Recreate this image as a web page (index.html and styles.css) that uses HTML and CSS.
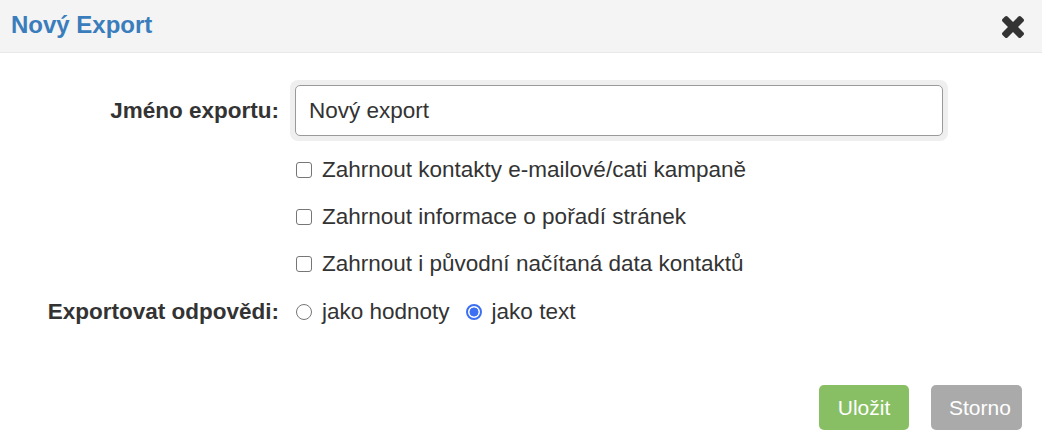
FILE: index.html
```html
<!DOCTYPE html>
<html lang="cs">
<head>
<meta charset="utf-8">
<title>Nový Export</title>
<link rel="stylesheet" href="styles.css">
</head>
<body>
<div class="dialog">
  <div class="dialog-header">
    <h1 class="dialog-title">Nový Export</h1>
    <button class="close-btn" type="button" aria-label="Zavřít">
      <svg viewBox="302 366 1188 1188" width="22" height="22" aria-hidden="true"><path fill="#333" d="M1490 1322q0 40-28 68l-136 136q-28 28-68 28t-68-28l-294-294-294 294q-28 28-68 28t-68-28l-136-136q-28-28-28-68t28-68l294-294-294-294q-28-28-28-68t28-68l136-136q28-28 68-28t68 28l294 294 294-294q28-28 68-28t68 28l136 136q28 28 28 68t-28 68l-294 294 294 294q28 28 28 68z"/></svg>
    </button>
  </div>
  <form class="dialog-body">
    <div class="form-row row-name">
      <label class="form-label" for="name">Jméno exportu:</label>
      <div class="input-wrap"><input id="name" class="text-input" type="text" value="Nový export"></div>
    </div>
    <div class="form-row row-check">
      <span></span>
      <label class="check"><input type="checkbox" class="box cb"><span>Zahrnout kontakty e-mailové/cati kampaně</span></label>
    </div>
    <div class="form-row row-check">
      <span></span>
      <label class="check"><input type="checkbox" class="box cb"><span>Zahrnout informace o pořadí stránek</span></label>
    </div>
    <div class="form-row row-check">
      <span></span>
      <label class="check"><input type="checkbox" class="box cb"><span>Zahrnout i původní načítaná data kontaktů</span></label>
    </div>
    <div class="form-row row-check">
      <span class="form-label">Exportovat odpovědi:</span>
      <div class="radios">
        <label class="check"><input type="radio" name="ans" class="box rb"><span>jako hodnoty</span></label>
        <label class="check"><input type="radio" name="ans" class="box rb" checked><span>jako text</span></label>
      </div>
    </div>
  </form>
  <div class="dialog-footer">
    <button class="btn btn-save" type="button">Uložit</button>
    <button class="btn btn-cancel" type="button">Storno</button>
  </div>
</div>
</body>
</html>
```
FILE: styles.css
```css
html, body {
  margin: 0;
  padding: 0;
  background: #fff;
}
body {
  font-family: "Liberation Sans", Arial, sans-serif;
  color: #333;
  width: 1042px;
  height: 441px;
  overflow: hidden;
}
.dialog {
  display: flex;
  flex-direction: column;
  height: 441px;
}
.dialog-header {
  background: #f4f4f4;
  border-bottom: 1px solid #e8e8e8;
  display: flex;
  align-items: center;
  justify-content: space-between;
  padding: 0 18px 0 11px;
  box-sizing: border-box;
  height: 53px;
}
.dialog-title {
  margin: 0;
  font-size: 24px;
  font-weight: bold;
  color: #3a7dbc;
  line-height: 1;
  padding-bottom: 2px;
}
.close-btn {
  border: 0;
  background: none;
  padding: 0;
  width: 22px;
  height: 22px;
  display: flex;
  margin-top: 1px;
}
.dialog-body {
  margin: 0;
  padding-top: 27px;
  display: flex;
  flex-direction: column;
}
.form-row {
  display: grid;
  grid-template-columns: 279px 648px;
  column-gap: 16px;
  align-items: center;
  font-size: 22.5px;
}
.form-label {
  font-weight: bold;
  text-align: right;
  color: #333;
}
.row-name {
  height: 61px;
  margin-bottom: 5px;
}
.input-wrap {
  border-radius: 8px;
  background: #efefef;
  padding: 5px;
  margin-left: -5px;
  width: 648px;
}
.text-input {
  display: block;
  box-sizing: border-box;
  width: 648px;
  height: 51px;
  border: 1px solid #9a9a9a;
  border-radius: 5px;
  padding: 0 13px;
  font-family: "Liberation Sans", Arial, sans-serif;
  font-size: 22.5px;
  color: #333;
  background: #fff;
  outline: none;
}
.row-check {
  height: 47px;
}
.row-check:last-child {
  height: 49px;
}
.check {
  display: inline-flex;
  align-items: center;
  color: #333;
}
.box {
  appearance: none;
  -webkit-appearance: none;
  box-sizing: border-box;
  background: #fff;
  flex: none;
  margin: 0;
}
.cb {
  width: 16px;
  height: 16px;
  border: 1.5px solid #767676;
  border-radius: 3px;
  margin: 1px 10px 0 1px;
}
.rb {
  width: 16px;
  height: 16px;
  border: 1.5px solid #767676;
  border-radius: 50%;
  margin: 1px 10px 0 1px;
}
.rb:checked {
  border: 2px solid #3c6ff2;
  background: radial-gradient(circle, #3c6ff2 0 4.2px, #fff 4.8px);
}
.radios {
  display: flex;
  gap: 15px;
}
.dialog-footer {
  margin-top: auto;
  display: flex;
  justify-content: flex-end;
  gap: 22px;
  padding: 0 20px 11px 0;
}
.btn {
  height: 45px;
  border: 0;
  border-radius: 5px;
  color: #fff;
  font-family: "Liberation Sans", Arial, sans-serif;
  font-size: 21px;
  padding: 0 18px;
}
.btn-save {
  background: #88bf64;
  width: 90px;
}
.btn-cancel {
  background: #aaaaaa;
  width: 91px;
}
```
